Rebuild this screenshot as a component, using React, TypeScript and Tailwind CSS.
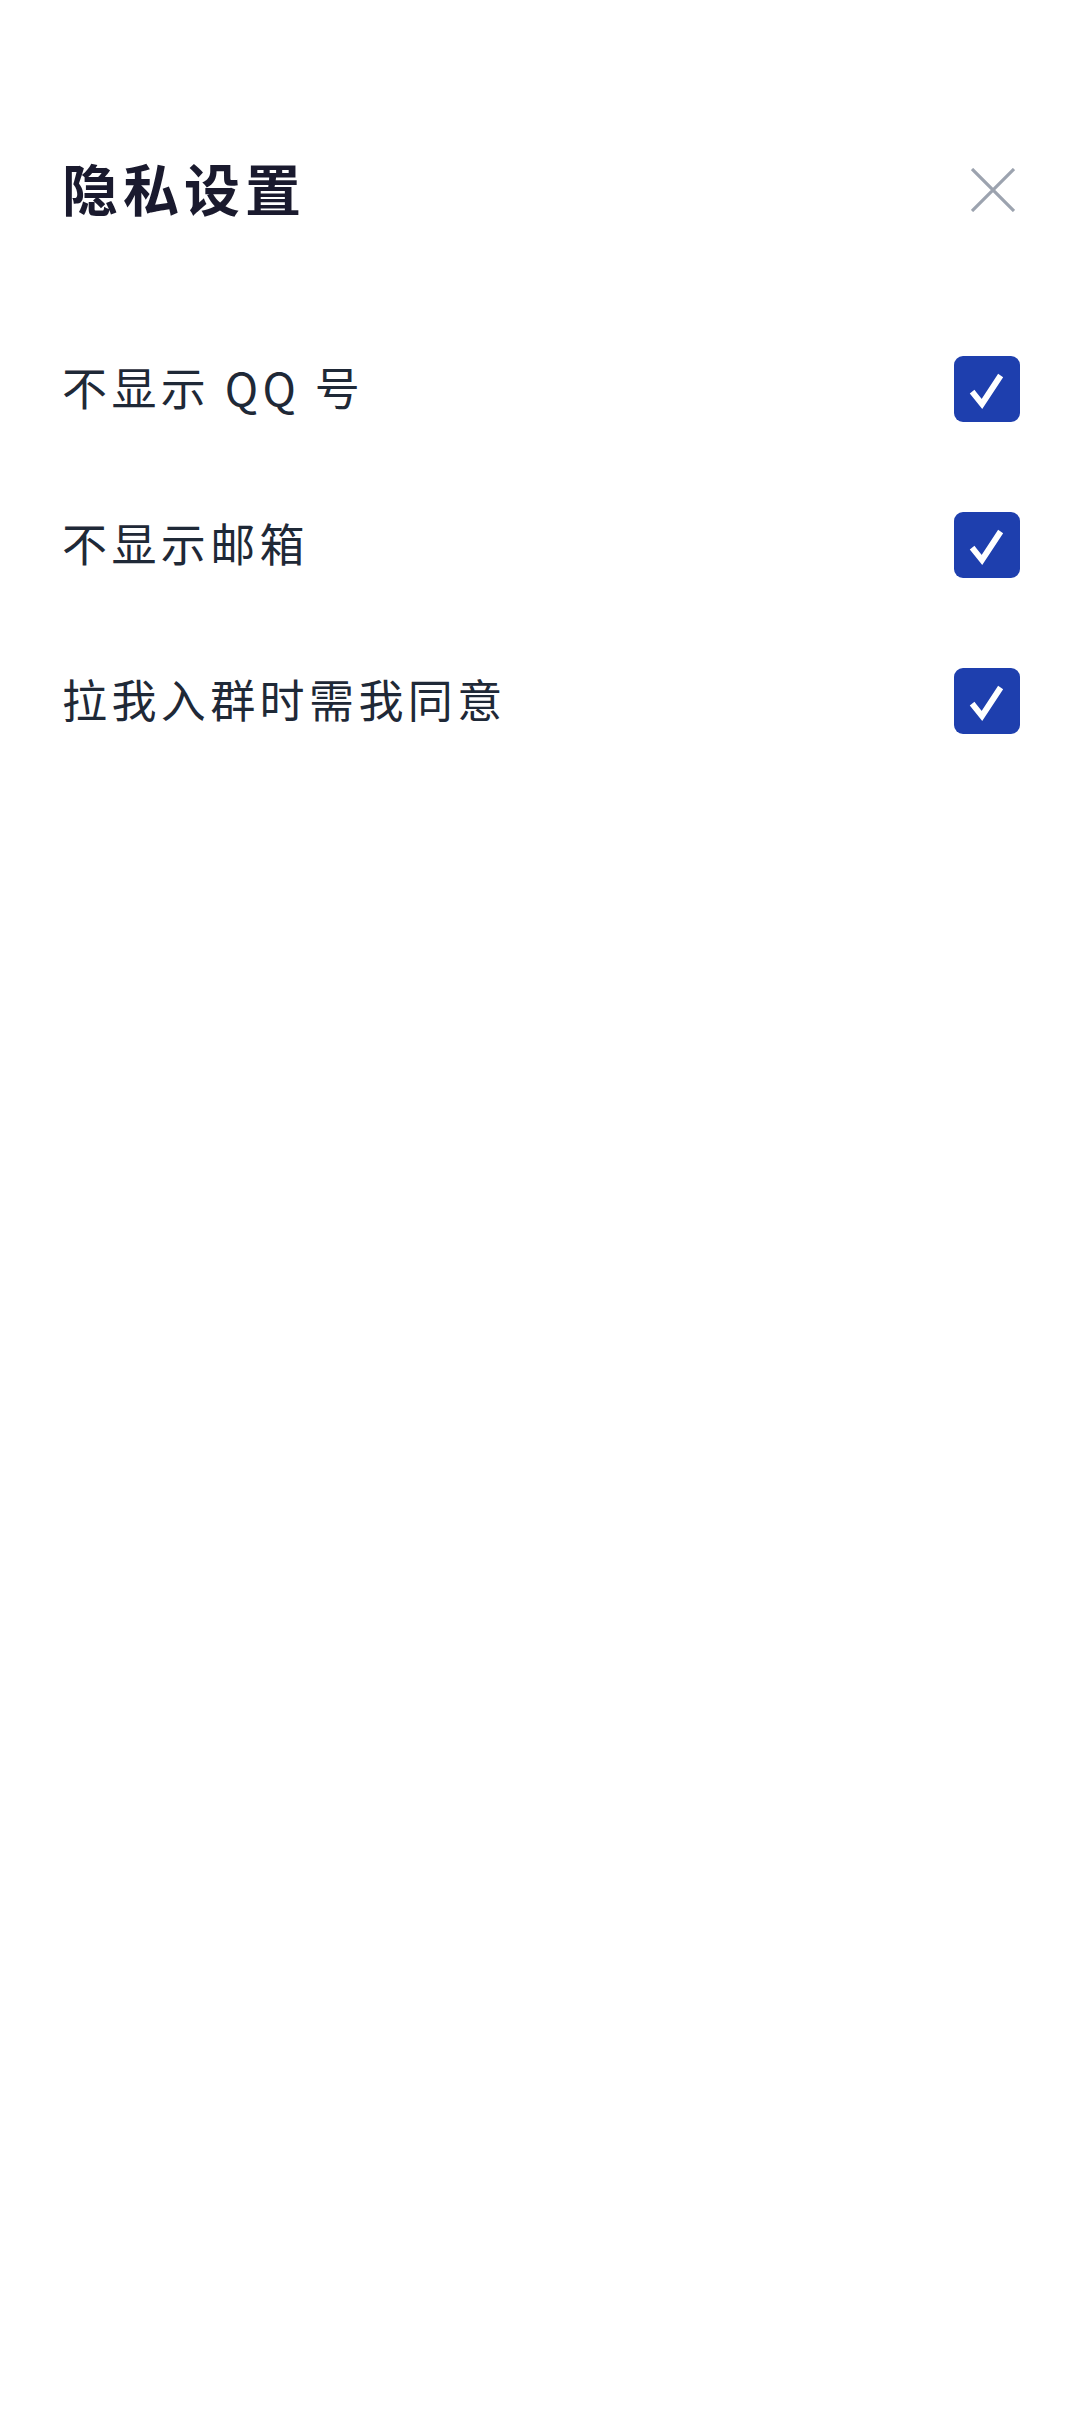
const items = ["不显示 QQ 号", "不显示邮箱", "拉我入群时需我同意"];

const CheckBox = () => (
  <div className="w-[66px] h-[66px] rounded-[9px] bg-[#1e3fae] flex items-center justify-center shrink-0">
    <svg width="66" height="66" viewBox="0 0 66 66" fill="none">
      <path
        d="M20 38 L28 48 L45 22"
        stroke="white"
        strokeWidth="6"
        strokeLinecap="square"
        strokeLinejoin="miter"
      />
    </svg>
  </div>
);

const App = () => {
  return (
    <div
      className="w-[1080px] min-h-[2412px] bg-white pl-[62px] pr-[60px] pt-[127px]"
      style={{ fontFamily: '"Noto Sans CJK SC", "Noto Sans", sans-serif' }}
    >
      {/* Header */}
      <div className="h-[120px] flex items-center justify-between">
        <h1 className="text-[56px] font-bold tracking-[5px] text-[#1a1a2e]">隐私设置</h1>
        <button className="w-[50px] h-[50px] flex items-center justify-center mr-[2px] mt-[6px]">
          <svg width="44" height="44" viewBox="0 0 44 44" fill="none">
            <path d="M1 1 L43 43 M43 1 L1 43" stroke="#9ca3af" strokeWidth="3.2" />
          </svg>
        </button>
      </div>

      <ul className="mt-[64px]">
        {items.map((label) => (
          <li key={label} className="h-[156px] flex items-center justify-between">
            <span className="text-[45px] font-normal tracking-[4.4px] text-[#1f2937] -mt-[4px]">{label}</span>
            <CheckBox />
          </li>
        ))}
      </ul>
    </div>
  );
};

export default App;
